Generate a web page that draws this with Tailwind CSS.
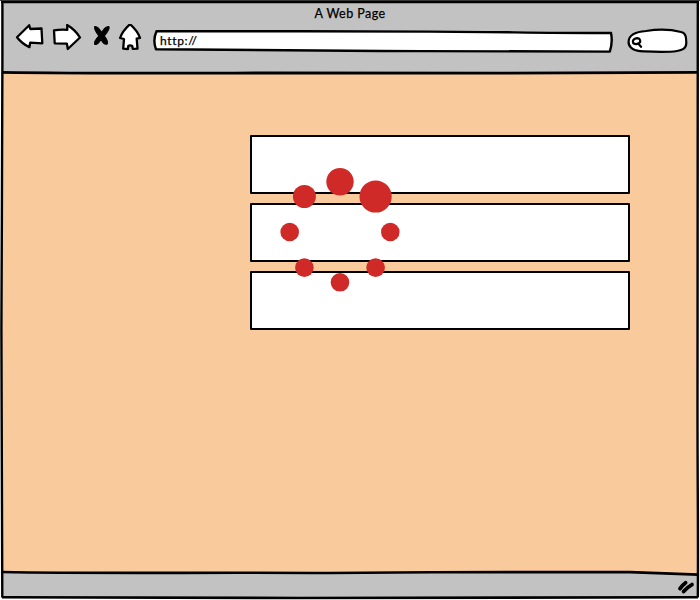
<!DOCTYPE html>
<html lang="en">
<head>
<meta charset="utf-8">
<title>A Web Page</title>
<script src="https://cdn.jsdelivr.net/npm/@tailwindcss/browser@4"></script>
</head>
<body class="bg-white">
<div class="relative flex h-[600px] w-[700px] flex-col overflow-hidden font-[Lato,sans-serif] text-black">
  <header class="mx-[2px] mt-[2px] flex h-[70px] flex-col bg-[#c2c2c2]">
    <h1 class="h-[22px] w-full text-center text-[12.5px] leading-[23px] tracking-[0.45px] whitespace-nowrap [-webkit-text-stroke:0.25px_black]">A Web Page</h1>
    <div class="flex h-[34px] items-start pl-[12px]">
      <svg class="h-[34px] w-[32px] shrink-0" viewBox="14 24 32 34" fill="white" stroke="black" stroke-width="2.3" stroke-linejoin="round"><path d="M17 37.3 L29.2 25.2 L30.3 29 L41.5 28.5 L42.3 43.3 L30.2 42.6 L29.4 47.2 Q22 43.8 17 37.3Z"/></svg>
      <svg class="ml-[4px] h-[34px] w-[34px] shrink-0" viewBox="50 24 34 34" fill="white" stroke="black" stroke-width="2.3" stroke-linejoin="round"><path d="M54 30.4 Q60 29.3 67.3 29.8 L67.2 25 Q75 29.6 80 37.5 L67.8 49 L66.9 43.6 L54.7 43.3Z"/></svg>
      <svg class="ml-[8px] h-[34px] w-[20px] shrink-0" viewBox="92 24 20 34" stroke="black" stroke-width="1.1" stroke-linejoin="round"><path d="M94.8 26.5 Q97.5 25.8 101.7 32.5 Q105.5 26 109 26.7 Q110 29.5 104.3 35.8 Q109 42.3 107 44.2 Q103.6 45 101 39.2 Q97.8 45 94.8 44.4 Q93.5 41.6 99 36 Q93.5 29.3 94.8 26.5Z"/></svg>
      <svg class="ml-[5px] h-[34px] w-[26px] shrink-0" viewBox="117 24 26 34" fill="white" stroke="black" stroke-width="2.3" stroke-linejoin="round"><path d="M130 24.2 Q137.5 30.8 140 37.9 L136.7 38.6 L137.5 48.6 L132.8 48.8 L132.2 46 Q130 44.6 128.3 46 L127.9 49 L123.2 48.7 L124 39 L120.1 38 Q122.2 31.3 130 24.2Z"/></svg>
      <div class="relative ml-[9px] mt-[5px] h-[26px] w-[462px] shrink-0">
        <svg class="h-[26px] w-[462px]" viewBox="152 29 462 26" fill="white" stroke="black" stroke-width="2.4" stroke-linejoin="round"><path d="M156.5 31.2 C260 30.5 330 31.8 430 31.6 C500 31.8 550 33.3 611 33 Q612.9 42 609.8 51.6 C510 51.4 450 51.1 380 51 C300 50 220 49.5 156 49.2 Q152.5 40 156.5 31.2Z"/></svg>
        <span class="absolute left-[8px] top-[3px] text-[12px] leading-[18px] tracking-[0.65px] [-webkit-text-stroke:0.25px_black]">http://</span>
      </div>
      <svg class="ml-[12px] mt-[2px] h-[30px] w-[62px] shrink-0" viewBox="626 26 62 30" fill="white" stroke="black" stroke-width="2.2" stroke-linecap="round" stroke-linejoin="round"><path d="M646 31 C659 29 672 29.7 681 32 C686.3 33 686.2 38 686.3 43 C686.2 49 682 50.2 677 51 C666 52.7 653 51.8 640 51.2 C632 50.8 628.2 45.8 628.6 41.5 C628.9 35 636 31.8 646 31Z"/><path d="M637.2 38.2 Q640.8 38.4 640.1 42.2 Q637 45.3 633.3 43.2 Q631.4 39.2 637.2 38.2ZM638.4 43.8 L641 46.8" stroke-width="2.2"/></svg>
    </div>
  </header>
  <main class="mx-[2px] flex h-[501px] flex-col gap-[9px] bg-[#f9ca9c] pl-[248px] pt-[63px]">
    <section class="h-[59px] w-[380px] rounded-[1px] border-2 border-black bg-white"></section>
    <section class="h-[59px] w-[380px] rounded-[1px] border-2 border-black bg-white"></section>
    <section class="h-[59px] w-[380px] rounded-[1px] border-2 border-black bg-white"></section>
  </main>
  <footer class="mx-[2px] h-[25px] bg-[#c2c2c2]"></footer>

  <!-- Hand-drawn window frame -->
  <svg class="pointer-events-none absolute inset-0 h-[600px] w-[700px]" viewBox="0 0 700 600" fill="none" stroke="black">
    <path d="M640 570 L697 574.5 V570Z" fill="#f9ca9c" stroke="none"/>
    <path d="M0 0H700V1H0Z" fill="#444844" stroke="none"/>
    <path d="M1 2 H699" stroke-width="2.4"/>
    <path d="M2.4 2 V60 C2.8 180 1.3 230 1.4 330 C1.4 420 2.4 480 2.3 597.5" stroke-width="2.4"/>
    <path d="M697.8 2 C698.2 180 696.9 300 697.5 400 C697.4 480 698.4 540 697.8 597.5" stroke-width="2.4"/>
    <path d="M2 72.3 C80 73.5 160 73.2 260 73 C330 72.4 410 73.6 500 73.2 C580 72.6 640 72.4 698 72.3" stroke-width="2.8"/>
    <path d="M2 572 C100 573.8 200 572.2 330 573 C430 572 540 571.6 630 572.1 Q665 573.2 698 574.6" stroke-width="2.6"/>
    <path d="M2 597.2 C90 598.3 180 597 300 598 C420 597.2 550 598.7 698 597.2" stroke-width="2.6"/>
    <path d="M680 588.6 Q682 585.5 685.6 582.7 M683.6 591.6 Q687.5 587 692 584.6" stroke-width="3.8" stroke-linecap="round"/>
  </svg>

  <!-- Loading spinner -->
  <svg class="absolute left-[280px] top-[160px] h-[140px] w-[120px]" viewBox="280 160 120 140" fill="#cf2a27">
    <circle cx="340" cy="181.8" r="13.7"/><circle cx="375.6" cy="196.5" r="16.1"/>
    <circle cx="304.4" cy="196.5" r="11.5"/><circle cx="289.7" cy="232" r="9.3"/>
    <circle cx="390.3" cy="232" r="9.3"/><circle cx="304.4" cy="267.6" r="9.3"/>
    <circle cx="375.6" cy="267.6" r="9.3"/><circle cx="340" cy="282.3" r="9.3"/>
  </svg>
</div>
</body>
</html>
